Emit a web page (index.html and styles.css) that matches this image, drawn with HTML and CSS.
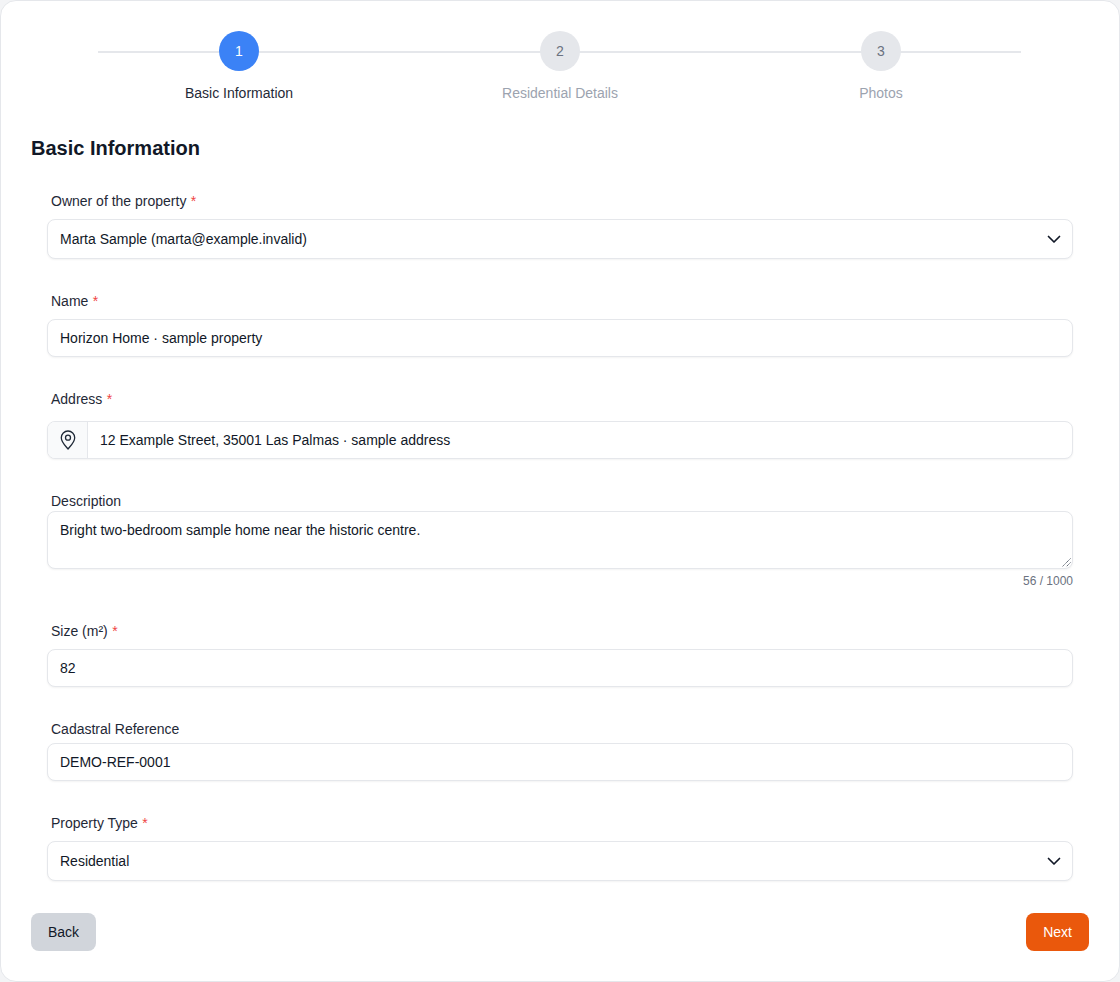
FILE: index.html
```html
<!DOCTYPE html>
<html lang="en">
<head>
<meta charset="utf-8">
<title>Basic Information</title>
<link rel="stylesheet" href="styles.css">
</head>
<body>
<main class="card">
  <div class="stepper">
    <div class="stepper-line"></div>
    <div class="step step-active"><div class="step-dot">1</div><div class="step-label">Basic Information</div></div>
    <div class="step"><div class="step-dot">2</div><div class="step-label">Residential Details</div></div>
    <div class="step"><div class="step-dot">3</div><div class="step-label">Photos</div></div>
  </div>
  <h1 class="title">Basic Information</h1>
  <form class="form">
    <div class="field">
      <div class="label gap-9">Owner of the property <span class="req">*</span></div>
      <div class="control select select-short">
        <span>Marta Sample (marta@example.invalid)</span>
        <svg class="chevron" viewBox="0 0 14 9" width="14" height="9"><path d="M1.5 1.5 7 7l5.500-5.500" fill="none" stroke="#111827" stroke-width="1.700" stroke-linecap="round" stroke-linejoin="round"/></svg>
      </div>
    </div>
    <div class="field">
      <div class="label gap-8">Name <span class="req">*</span></div>
      <div class="control input">Horizon Home · sample property</div>
    </div>
    <div class="field">
      <div class="label gap-12">Address <span class="req">*</span></div>
      <div class="control input addon-input">
        <span class="addon">
          <svg viewBox="0 0 16 20" width="16" height="20"><path d="M8 19C7 17.600 1.300 12.400 1.300 7.700a6.700 6.700 0 0 1 13.400 0C14.700 12.400 9 17.600 8 19z" fill="none" stroke="#1f2937" stroke-width="1.300" stroke-linejoin="round"/><circle cx="8" cy="7.700" r="2.500" fill="none" stroke="#1f2937" stroke-width="1.300"/></svg>
        </span>
        <span class="addon-text">12 Example Street, 35001 Las Palmas · sample address</span>
      </div>
    </div>
    <div class="field">
      <div class="label">Description</div>
      <div class="control textarea">Bright two-bedroom sample home near the historic centre.
        <svg class="grip" viewBox="0 0 9 9" width="9" height="9"><path d="M8.500 .5l-8 8M8.500 4.500l-4 4" fill="none" stroke="#4b5563" stroke-width="1" stroke-dasharray="1.200 .6"/></svg>
      </div>
      <div class="counter">56 / 1000</div>
    </div>
    <div class="field">
      <div class="label gap-8">Size (m²) <span class="req">*</span></div>
      <div class="control input">82</div>
    </div>
    <div class="field">
      <div class="label gap-4">Cadastral Reference</div>
      <div class="control input">DEMO-REF-0001</div>
    </div>
    <div class="field">
      <div class="label gap-8">Property Type <span class="req">*</span></div>
      <div class="control select">
        <span>Residential</span>
        <svg class="chevron" viewBox="0 0 14 9" width="14" height="9"><path d="M1.500 1.500 7 7l5.500-5.500" fill="none" stroke="#111827" stroke-width="1.700" stroke-linecap="round" stroke-linejoin="round"/></svg>
      </div>
    </div>
  </form>
  <div class="actions">
    <button class="btn btn-back" type="button">Back</button>
    <button class="btn btn-next" type="button">Next</button>
  </div>
</main>
</body>
</html>
```
FILE: styles.css
```css
* { box-sizing: border-box; }
html, body { margin: 0; padding: 0; }
body {
  width: 1120px;
  height: 982px;
  background: #f3f4f6;
  font-family: "Liberation Sans", Arial, sans-serif;
  font-size: 14px;
  line-height: 20px;
  color: #111827;
  overflow: hidden;
}
.card {
  height: 982px;
  background: #fff;
  border: 1px solid #e5e7eb;
  border-radius: 16px;
  padding: 30px;
}
.stepper {
  position: relative;
  display: grid;
  grid-template-columns: repeat(3, 321px);
  width: 963px;
  margin: 0 auto;
}
.stepper-line {
  position: absolute;
  left: 19px;
  right: 21px;
  top: 20px;
  height: 2px;
  background: #e5e7eb;
}
.step {
  position: relative;
  display: flex;
  flex-direction: column;
  align-items: center;
}
.step-dot {
  width: 40px;
  height: 40px;
  border-radius: 50%;
  background: #e5e7eb;
  color: #6b7280;
  display: flex;
  align-items: center;
  justify-content: center;
  margin-bottom: 12px;
}
.step-label { color: #9ca3af; }
.step-active .step-dot { background: #3b82f6; color: #fff; }
.step-active .step-label { color: #1f2937; }
.title {
  margin: 31px 0 0;
  font-size: 20px;
  line-height: 28px;
  font-weight: 700;
  color: #111827;
}
.form {
  display: flex;
  flex-direction: column;
  gap: 32px;
  margin-top: 29px;
  padding: 0 16px;
}
.label {
  padding-left: 4px;
  color: #1f2937;
  height: 20px;
}
.gap-4 { margin-bottom: 4px; }
.gap-8 { margin-bottom: 8px; }
.gap-9 { margin-bottom: 9px; }
.gap-12 { margin-bottom: 12px; }
.req { color: #ef4444; margin-left: .5px; }
.control {
  background: #fff;
  border: 1px solid #e5e7eb;
  border-radius: 8px;
  box-shadow: 0 1px 2px rgba(0, 0, 0, .05);
  padding: 0 12px;
  color: #111827;
}
.input {
  height: 38px;
  display: flex;
  align-items: center;
}
.select {
  height: 40px;
  display: flex;
  align-items: center;
  justify-content: space-between;
}
.select-short { height: 40px; margin-top: -1px; }
.chevron { margin-right: -1px; }
.addon-input { padding: 0; }
.addon {
  width: 40px;
  height: 100%;
  flex: none;
  display: flex;
  align-items: center;
  justify-content: center;
  background: #f9fafb;
  border-right: 1px solid #e5e7eb;
  border-radius: 7px 0 0 7px;
}
.addon-text { padding-left: 12px; }
.textarea {
  position: relative;
  height: 58px;
  padding-top: 8px;
}
.grip { position: absolute; right: 1px; bottom: 1px; }
.counter {
  margin-top: 4px;
  height: 16px;
  font-size: 12px;
  line-height: 16px;
  color: #6b7280;
  text-align: right;
}
.actions {
  display: flex;
  justify-content: space-between;
  margin-top: 32px;
}
.btn {
  height: 38px;
  padding: 0 17px;
  border: 0;
  border-radius: 8px;
  font: inherit;
}
.btn-back { background: #d1d5db; color: #111827; }
.btn-next { background: #ea580c; color: #fff; }
```
